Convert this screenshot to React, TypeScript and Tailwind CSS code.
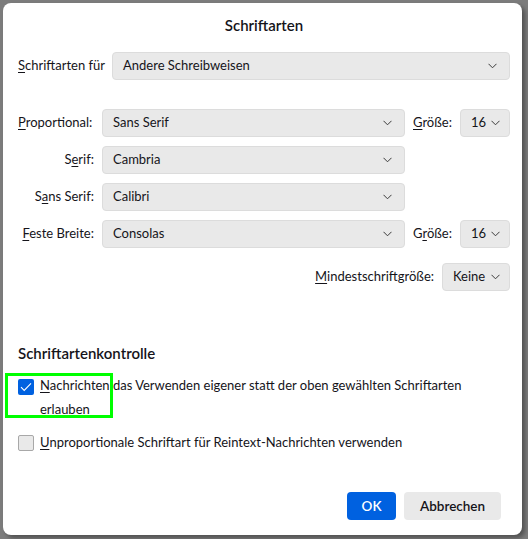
import React from 'react';

const font = { fontFamily: '"Segoe UI", Lato, "Noto Sans", sans-serif' };

function Chevron() {
  return (
    <svg width="9" height="6" viewBox="0 0 9 6" className="shrink-0">
      <polyline points="0.5,0.8 4.5,4.8 8.5,0.8" fill="none" stroke="#3b3b3b" strokeWidth="1" />
    </svg>
  );
}

function Select({ value, className }: { value: string; className: string }) {
  return (
    <div
      className={`flex h-[28px] items-center justify-between rounded-[4px] border border-[#dcdcdc] bg-[#e9e9e9] pl-[10px] text-[13px] text-[#15141a] ${className}`}
    >
      <span>{value}</span>
      <Chevron />
    </div>
  );
}

// label with the access key letter underlined
function Key({ before = '', k, after }: { before?: string; k: string; after: string }) {
  return (
    <span className="whitespace-nowrap">
      {before}
      <span className="underline underline-offset-2">{k}</span>
      {after}
    </span>
  );
}

function FontRow({ label, value, size }: { label: React.ReactNode; value: string; size?: React.ReactNode }) {
  return (
    <div className="flex items-center">
      <div className="w-[76px] text-right">{label}</div>
      <Select value={value} className="ml-[8px] w-[303px] pr-[12px]" />
      {size && (
        <>
          <div className="ml-[8px] w-[47px]">{size}</div>
          <Select value="16" className="w-[50px] pr-[9px]" />
        </>
      )}
    </div>
  );
}

export default function App() {
  return (
    <div className="h-[539px] w-[528px] overflow-hidden bg-[#7c7c7c] pl-[3px] pt-[3px]" style={font}>
      <div className="relative flex h-[532px] w-[519px] flex-col rounded-[8px] bg-white pl-[15px] pr-[12px] text-[13px] text-[#15141a] shadow-[3px_3px_4px_rgba(0,0,0,0.35)]">
        <h1 className="pt-[12px] text-center text-[15px] font-semibold leading-[20px]">Schriftarten</h1>

        <div className="mt-[17px] flex items-center">
          <div className="w-[86px] shrink-0">
            <Key k="S" after="chriftarten für" />
          </div>
          <Select value="Andere Schreibweisen" className="ml-[8px] flex-1 pr-[12px]" />
        </div>

        <div className="mt-[29px] flex flex-col gap-[9px]">
          <div className="flex items-center">
            <div className="w-[76px]">
              <Key k="P" after="roportional:" />
            </div>
            <Select value="Sans Serif" className="ml-[8px] w-[303px] pr-[12px]" />
            <div className="ml-[8px] w-[47px]">
              <Key k="G" after="röße:" />
            </div>
            <Select value="16" className="w-[50px] pr-[9px]" />
          </div>
          <FontRow label={<Key before="S" k="e" after="rif:" />} value="Cambria" />
          <FontRow label={<Key before="S" k="a" after="ns Serif:" />} value="Calibri" />
          <FontRow label={<Key k="F" after="este Breite:" />} value="Consolas" size={<Key before="G" k="r" after="öße:" />} />
        </div>

        <div className="mt-[15px] flex items-center justify-end gap-[8px]">
          <Key k="M" after="indestschriftgröße:" />
          <Select value="Keine" className="w-[68px] pr-[9px]" />
        </div>

        <h2 className="mt-[52px] text-[15px] font-semibold leading-[20px]">Schriftartenkontrolle</h2>

        <div className="mt-[10px] flex items-start gap-[6px]">
          <div className="mt-[6px] flex h-[16px] w-[16px] shrink-0 items-center justify-center rounded-[2px] bg-[#0061e0]">
            <svg width="12" height="10" viewBox="0 0 12 10">
              <polyline points="1,5.2 4.2,8.4 11,1.4" fill="none" stroke="white" strokeWidth="1.1" />
            </svg>
          </div>
          <div className="leading-[24px]">
            <Key k="N" after="achrichten das Verwenden eigener statt der oben gewählten Schriftarten" />
            <br />
            erlauben
          </div>
        </div>

        <div className="mt-[12px] flex items-center gap-[6px]">
          <div className="h-[16px] w-[16px] shrink-0 rounded-[2px] border border-[#a8a8a8] bg-[#e9e9e9]" />
          <Key k="U" after="nproportionale Schriftart für Reintext-Nachrichten verwenden" />
        </div>

        <div className="mt-auto mb-[15px] flex justify-end gap-[8px] pr-[9px]">
          <button className="h-[28px] w-[49px] rounded-[4px] bg-[#0061e0] text-[13.5px] font-semibold text-white">OK</button>
          <button className="h-[28px] w-[97px] rounded-[4px] bg-[#e9e9e9] text-[13.5px] font-semibold text-[#15141a]">Abbrechen</button>
        </div>

        {/* green focus marker round the first option */}
        <div className="pointer-events-none absolute left-[2px] top-[370px] h-[45px] w-[108px] border-[3px] border-[#00ff00]" />
      </div>
    </div>
  );
}
